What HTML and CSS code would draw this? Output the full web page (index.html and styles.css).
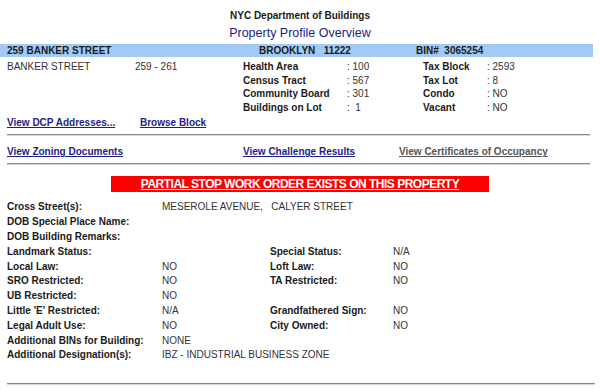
FILE: index.html
```html
<!DOCTYPE html>
<html lang="en">
<head>
    <meta charset="UTF-8">
    <title>Property Profile Overview</title>
    <link rel="stylesheet" href="styles.css">
</head>
<body>

    <div class="page">
        <!-- Kopfzeile -->
        <div class="heading">
            <div class="agency">NYC Department of Buildings</div>
            <div class="title">Property Profile Overview</div>
        </div>

        <div class="address-bar">
            <span>259 BANKER STREET</span>
            <span>BROOKLYN &nbsp; 11222</span>
            <span>BIN# &nbsp;3065254</span>
        </div>

        <!-- Grunddaten -->
        <div class="summary">
            <span class="plain">BANKER STREET</span>
            <span class="plain">259 - 261</span>
            <span>Health Area</span>
            <span class="plain">: 100</span>
            <span>Tax Block</span>
            <span class="plain">: 2593</span>

            <span></span>
            <span></span>
            <span>Census Tract</span>
            <span class="plain">: 567</span>
            <span>Tax Lot</span>
            <span class="plain">: 8</span>

            <span></span>
            <span></span>
            <span>Community Board</span>
            <span class="plain">: 301</span>
            <span>Condo</span>
            <span class="plain">: NO</span>

            <span></span>
            <span></span>
            <span>Buildings on Lot</span>
            <span class="plain">: &nbsp;1</span>
            <span>Vacant</span>
            <span class="plain">: NO</span>
        </div>

        <div class="links first">
            <a href="#">View DCP Addresses...</a>
            <a href="#">Browse Block</a>
        </div>

        <hr>

        <div class="links second">
            <a href="#">View Zoning Documents</a>
            <a href="#">View Challenge Results</a>
            <a href="#" class="muted">View Certificates of Occupancy</a>
        </div>

        <hr>

        <!-- Warnung -->
        <div class="alert">
            <a href="#">PARTIAL STOP WORK ORDER EXISTS ON THIS PROPERTY</a>
        </div>

        <!-- Details -->
        <div class="details">
            <span>Cross Street(s):</span>
            <span class="plain span-3">MESEROLE AVENUE, &nbsp; CALYER STREET</span>

            <span>DOB Special Place Name:</span>
            <span class="plain span-3"></span>

            <span>DOB Building Remarks:</span>
            <span class="plain span-3"></span>

            <span>Landmark Status:</span>
            <span class="plain"></span>
            <span>Special Status:</span>
            <span class="plain">N/A</span>

            <span>Local Law:</span>
            <span class="plain">NO</span>
            <span>Loft Law:</span>
            <span class="plain">NO</span>

            <span>SRO Restricted:</span>
            <span class="plain">NO</span>
            <span>TA Restricted:</span>
            <span class="plain">NO</span>

            <span>UB Restricted:</span>
            <span class="plain">NO</span>
            <span></span>
            <span></span>

            <span>Little 'E' Restricted:</span>
            <span class="plain">N/A</span>
            <span>Grandfathered Sign:</span>
            <span class="plain">NO</span>

            <span>Legal Adult Use:</span>
            <span class="plain">NO</span>
            <span>City Owned:</span>
            <span class="plain">NO</span>

            <span>Additional BINs for Building:</span>
            <span class="plain span-3">NONE</span>

            <span>Additional Designation(s):</span>
            <span class="plain span-3">IBZ - INDUSTRIAL BUSINESS ZONE</span>
        </div>

        <hr class="bottom">
    </div>

</body>
</html>
```

FILE: styles.css
```css
body {
    font-family: 'Liberation Sans', Arial, sans-serif;
    font-size: 10px;
    color: #1a1a1a;
    background-color: #fff;
    margin: 0;
}

.page {
    width: 600px;
    padding-top: 10px;
}

.heading {
    text-align: center;
}

.agency {
    font-weight: bold;
    font-size: 10px;
    line-height: 12px;
}

.title {
    color: #1d1d8a;
    font-size: 12.5px;
    line-height: 16px;
    margin-top: 3px;
}

.address-bar {
    width: 586px;
    margin-top: 3px;
    padding-left: 7px;
    height: 13px;
    line-height: 13px;
    background-color: #a1cbf4;
    font-weight: bold;
    display: grid;
    grid-template-columns: 252px 157px 1fr;
}

.summary {
    display: grid;
    grid-template-columns: 128px 108px 104px 76px 64px 1fr;
    grid-auto-rows: 13.6px;
    padding: 3px 0 0 7px;
    font-weight: bold;
    line-height: 13.6px;
}

.plain {
    font-weight: normal;
    color: #333;
}

.links {
    display: flex;
    padding-left: 7px;
    font-weight: bold;
}

.links a {
    color: #1d1d8a;
}

.links.first {
    margin-top: 2px;
    line-height: 13px;
}

.links.first a:first-child {
    width: 133px;
}

.links.second {
    margin-top: 9px;
    line-height: 13px;
}

.links.second a:first-child {
    width: 236px;
}

.links.second a:nth-child(2) {
    width: 156px;
}

.links a.muted {
    color: #555;
}

hr {
    margin: 5px 10px 0 7px;
    border: none;
    border-top: 1px solid #8a8a8a;
    border-bottom: 1px solid #d6d6d6;
    height: 0;
}

.alert {
    width: 378px;
    margin: 11px auto 0;
    height: 16px;
    line-height: 16px;
    background-color: #ff0000;
    text-align: center;
}

.alert a {
    color: #fff;
    font-size: 12px;
    font-weight: bold;
    letter-spacing: -0.5px;
}

.details {
    display: grid;
    grid-template-columns: 155px 108px 123px 1fr;
    grid-auto-rows: 14.8px;
    line-height: 14.8px;
    padding: 8px 0 0 7px;
    font-weight: bold;
}

.span-3 {
    grid-column: span 3;
}

hr.bottom {
    margin: 20px 5px 0 7px;
}
```
